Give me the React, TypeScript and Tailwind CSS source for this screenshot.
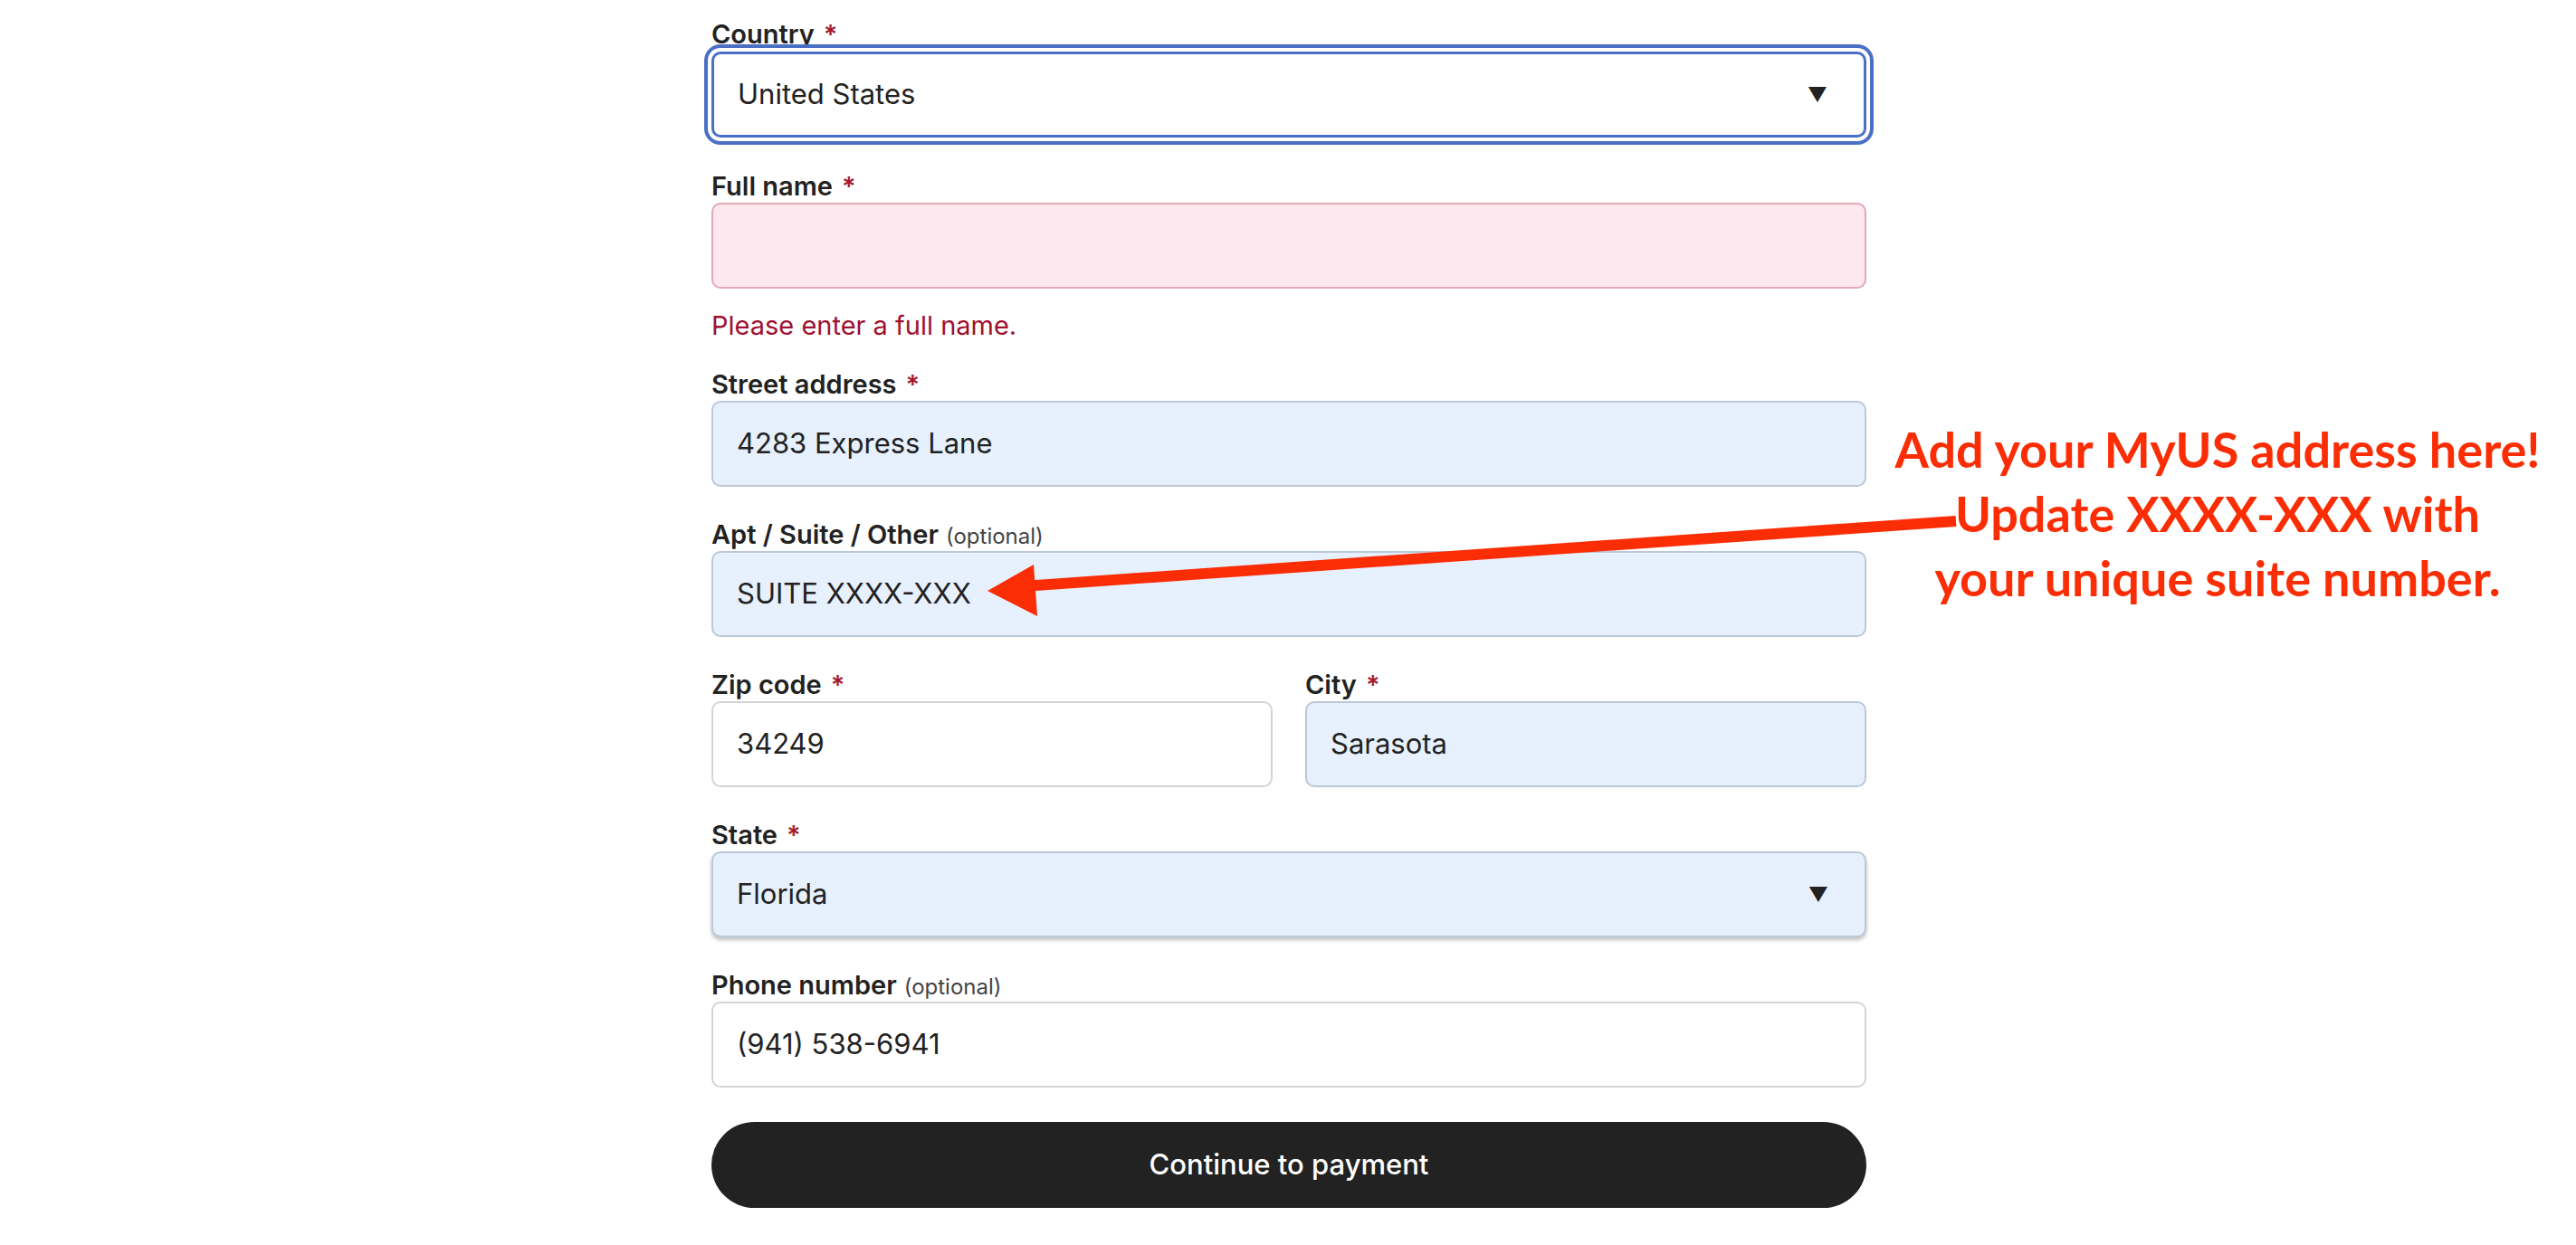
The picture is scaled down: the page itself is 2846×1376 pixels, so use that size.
import React from "react";

const font = { fontFamily: "Inter, 'Noto Sans', sans-serif" };

function Label({ text, required, optional }: { text: string; required?: boolean; optional?: boolean }) {
  return (
    <div className="h-[40px] flex items-end pb-[4px] text-[29px] font-semibold text-[#222] leading-none">
      <span>{text}</span>
      {required && <span className="ml-[10px] text-[#a61a2e]">*</span>}
      {optional && <span className="ml-[8px] text-[24px] font-normal text-[#444]">(optional)</span>}
    </div>
  );
}

function Field({ value, variant = "white", select, className = "" }: { value: string; variant?: "white" | "blue" | "pink" | "focus"; select?: boolean; className?: string }) {
  const styles = {
    white: "bg-white border-2 border-[#d4d4d4]",
    blue: "bg-[#e7f0fd] border-2 border-[#bcc7d8]",
    pink: "bg-[#fde8ef] border-2 border-[#e3a7b4]",
    focus: "bg-white border-[3px] border-[#4a6fc4] shadow-[0_0_0_4px_white,0_0_0_8px_#4a6fc4]",
  }[variant];
  return (
    <div className={`h-[95px] rounded-[10px] flex items-center justify-between px-[26px] text-[31px] text-[#222] ${styles} ${className}`}>
      <span>{value}</span>
      {select && <span className="text-[22px] mr-[14px]">▼</span>}
    </div>
  );
}

export default function App() {
  return (
    <div className="relative w-[2846px] h-[1376px] bg-white overflow-hidden" style={font}>
      <div className="ml-[786px] w-[1276px] pt-[16px] flex flex-col">
        <Label text="Country" required />
        <div className="mt-[1px]">
          <Field value="United States" variant="focus" select />
        </div>
        <div className="mt-[32px]"><Label text="Full name" required /></div>
        <Field value="" variant="pink" />
        <div className="mt-[26px] text-[29px] text-[#a0102f] leading-none">Please enter a full name.</div>
        <div className="mt-[29px]"><Label text="Street address" required /></div>
        <Field value="4283 Express Lane" variant="blue" />
        <div className="mt-[31px]"><Label text="Apt / Suite / Other" optional /></div>
        <Field value="SUITE XXXX-XXX" variant="blue" />
        <div className="mt-[31px] grid grid-cols-2 gap-x-[36px]">
          <div>
            <Label text="Zip code" required />
            <Field value="34249" />
          </div>
          <div>
            <Label text="City" required />
            <Field value="Sarasota" variant="blue" />
          </div>
        </div>
        <div className="mt-[31px]"><Label text="State" required /></div>
        <Field value="Florida" variant="blue" select className="shadow-[0_3px_4px_rgba(0,0,0,0.25)]" />
        <div className="mt-[31px]"><Label text="Phone number" optional /></div>
        <Field value="(941) 538-6941" />
        <button className="mt-[38px] h-[95px] rounded-full bg-[#222] text-white text-[31px] font-medium">
          Continue to payment
        </button>
      </div>

      <div
        className="absolute left-[2030px] top-[461px] w-[840px] flex flex-col items-center text-[#fb2d05] text-[54px] font-bold leading-[71px]"
        style={{ fontFamily: "Lato, 'Open Sans', sans-serif" }}
      >
        <span>Add your MyUS address here!</span>
        <span>Update XXXX-XXX with</span>
        <span>your unique suite number.</span>
      </div>

      <svg className="absolute left-0 top-0" width="2846" height="1376">
        <line x1="2161" y1="576" x2="1130" y2="648" stroke="#fb2d05" strokeWidth="12" />
        <polygon points="1091,653 1142,624 1146,681" fill="#fb2d05" />
      </svg>
    </div>
  );
}
